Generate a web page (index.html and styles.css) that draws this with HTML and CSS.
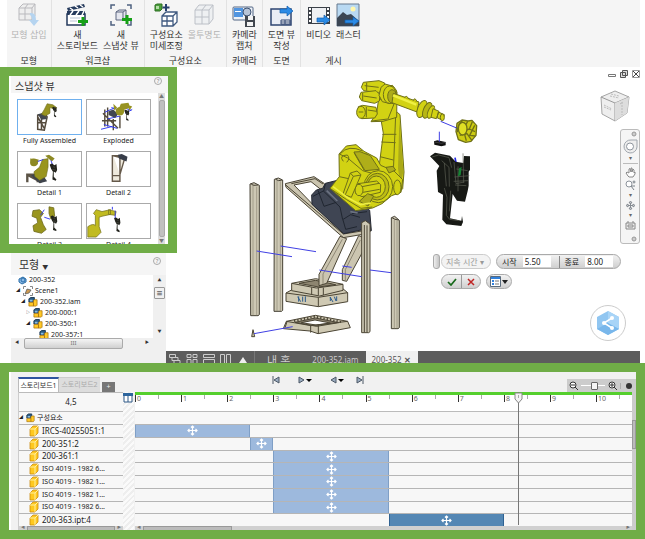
FILE: index.html
```html
<!DOCTYPE html>
<html lang="ko">
<head>
    <meta charset="UTF-8">
    <meta name="viewport" content="width=device-width, initial-scale=1.0">
    <title>200-352</title>
    <link rel="stylesheet" href="styles.css">
</head>
<body>
    <!-- shared shapes -->
    <svg class="defs" width="0" height="0" aria-hidden="true">
        <symbol id="move" viewBox="0 0 11 11">
            <path d="M5.500 1v9M1 5.500h9M4 2.500 5.500 1 7 2.500M4 8.500 5.500 10 7 8.500M2.500 4 1 5.500 2.500 7M8.500 4 10 5.500 8.500 7" fill="none" stroke="#fff" stroke-width="1.200"/>
        </symbol>
        <symbol id="part" viewBox="0 0 10 12">
            <path d="M1 4 4 1h5v7l-3 3H1z" fill="#ffc91f" stroke="#c98a12" stroke-width=".8"/>
            <path d="M1 4h5v7M6 4l3-3" fill="none" stroke="#fff0a0"/>
        </symbol>
        <symbol id="assembly" viewBox="0 0 11 11">
            <path d="M1 2 3 .5h4v5H1z" fill="#2b5c83" stroke="#16344f"/>
            <path d="M2 3h3v2H2z" fill="#8bbbe0"/>
            <path d="M1 6h5v-2l1-1h3v6l-1 1H1z" fill="#ffc928" stroke="#a8720c" stroke-width=".8"/>
            <path d="M6 6v4" stroke="#a8720c"/>
        </symbol>
        <symbol id="gun" viewBox="0 0 12 28">
            <path d="M0 2 3 0l4 3 3-2 1 9-2 4-3-2v8l4 4-1 2-5-2 1-11-3-5z" fill="#22231d"/>
            <path d="M5 5l3 1M4 9l5 1M5 13v8" stroke="#66675a" stroke-width=".7"/>
        </symbol>
    </svg>

    <header class="ribbon">
        <section class="ribbon-group">
            <div class="ribbon-tools">
                <button class="tool" disabled>
                    <svg width="24" height="24" viewBox="0 0 24 24"><path d="M2 5 6 1h12v12l-3 4H2zM2 5h13v12M15 5l3-4M8 5v12M2 11h13M8 5l3-4" fill="#eee" stroke="#b9b9bd"/><path d="M13 10q6-1 6 7h3l-5 6-5-6h3q0-4-2-5z" fill="#b5d4f0"/></svg>
                    <span>모형 삽입</span>
                </button>
            </div>
            <h2>모형</h2>
        </section>
        <section class="ribbon-group">
            <div class="ribbon-tools">
                <button class="tool">
                    <svg width="24" height="24" viewBox="0 0 24 24"><path d="M2 11h18v11H2z" fill="#fff" stroke="#253a5c" stroke-width="1.500"/><path d="M2 8h18v4H2zM2 5 19 1l1 3L3 8z" fill="#253a5c"/><path d="m5 5 3 2m2-4 3 2m2-3 3 2M5 12l3-4m3 4 3-4m3 4 2-4" stroke="#fff" stroke-width="1.500"/><path d="M5 15h10M5 18h7" stroke="#b9c3d2"/><path d="M18 14v9M13 18.500h10" stroke="#16a016" stroke-width="3"/></svg>
                    <span>새<br>스토리보드</span>
                </button>
                <button class="tool">
                    <svg width="24" height="24" viewBox="0 0 24 24"><path d="M2 6V2h4m12 0h4v4M2 18v4h4m12 0h4v-4" fill="none" stroke="#4f6280" stroke-width="1.500"/><path d="m7 9 3-2h7v8l-3 2H7zM7 9h7v8M14 9l3-2" fill="#e4e6ee" stroke="#5c6680"/><path d="M18 12v9M13 16.500h10" stroke="#16a016" stroke-width="3"/></svg>
                    <span>새<br>스냅샷 뷰</span>
                </button>
            </div>
            <h2>워크샵</h2>
        </section>
        <section class="ribbon-group">
            <div class="ribbon-tools">
                <button class="tool">
                    <svg width="24" height="24" viewBox="0 0 24 24"><path d="M1 2 3 1h5v5L6 8H1z" fill="#4b9e3b" stroke="#2c6e22"/><path d="M2 3h3v3H2z" fill="#b5dea9"/><path d="M12 1v7M8.500 4.500h7" stroke="#263f6d" stroke-width="2"/><path d="m8 13 4-4h11v10l-4 4H8zM8 13h11v10M19 13l4-4M13 13v10M8 18h11" fill="#fff" stroke="#405a80" stroke-width="1.300"/></svg>
                    <span>구성요소<br>미세조정</span>
                </button>
                <button class="tool" disabled>
                    <svg width="24" height="24" viewBox="0 0 24 24"><path d="m3 7 4-5h14v14l-4 5H3zM3 7h14v14M17 7l4-5M10 7v14M3 14h14M10 7l4-5" fill="#eef0f2" stroke="#bcc0c7"/></svg>
                    <span>올투명도</span>
                </button>
            </div>
            <h2>구성요소</h2>
        </section>
        <section class="ribbon-group">
            <div class="ribbon-tools">
                <button class="tool">
                    <svg width="24" height="24" viewBox="0 0 24 24"><rect x="1" y="4" width="20" height="13" rx="1" fill="#eef2f8" stroke="#526684"/><path d="M2 5h9v9H2z" fill="#5195e0"/><path d="M3 8h6v1H3z" fill="#fff"/><circle cx="15" cy="9" r="4" fill="#b7c4d7" stroke="#3d5271"/><path d="M13 13h10v11H13z" fill="#42474f"/><path d="M16 13h5v4h-5zM15 19h6v4h-6z" fill="#f4f4f4"/></svg>
                    <span>카메라<br>캡처</span>
                </button>
            </div>
            <h2>카메라</h2>
        </section>
        <section class="ribbon-group">
            <div class="ribbon-tools">
                <button class="tool">
                    <svg width="24" height="24" viewBox="0 0 24 24"><path d="M2 6h20v16H2z" fill="#e9edf5" stroke="#2e4571" stroke-width="1.500"/><path d="M12 17h9v4h-9zM12 19h9M16 17v4" fill="#fff" stroke="#2e4571"/><path d="M11 6h7V3l6 5-6 5v-3h-7z" fill="#2b8be6" stroke="#125fae" stroke-width=".7"/></svg>
                    <span>도면 뷰<br>작성</span>
                </button>
            </div>
            <h2>도면</h2>
        </section>
        <section class="ribbon-group">
            <div class="ribbon-tools">
                <button class="tool">
                    <svg width="24" height="24" viewBox="0 0 24 24"><path d="M1 4h22v17H1z" fill="#3b4048"/><path d="M5 5h14v15H5z" fill="#eef0f3"/><path d="M3 5v15M21 5v15" stroke="#fff" stroke-width="2" stroke-dasharray="2 2"/><path d="M10 15h7v-3l6 5-6 5v-3h-7z" fill="#2b8be6" stroke="#125fae" stroke-width=".7"/></svg>
                    <span>비디오</span>
                </button>
                <button class="tool">
                    <svg width="24" height="24" viewBox="0 0 24 24"><path d="M1 1h22v22H1z" fill="#b9d9f2" stroke="#66788d"/><circle cx="17" cy="6" r="2.500" fill="#fff7ad"/><path d="m1 15 6-6 4 3 4-1 8 7v5H1z" fill="#3b4654"/><path d="M9 17h8v-3l6 4-6 5v-3H9z" fill="#2b8be6" stroke="#125fae" stroke-width=".7"/></svg>
                    <span>래스터</span>
                </button>
            </div>
            <h2>게시</h2>
        </section>
    </header>

    <main class="workspace">
        <aside class="sidebar">
            <section class="snapshots">
                <div class="panel-head">
                    <h3>스냅샷 뷰</h3>
                    <button class="help" aria-label="도움말">?</button>
                </div>
                <div class="snapshots-body">
                    <div class="thumbs">
                        <figure class="thumb active">
                            <svg viewBox="0 0 65 36"><path d="M20 31V16l8-1 2 3-3 14zM24 31V17M20 18l7 12M20 24h8" fill="none" stroke="#554b3d" stroke-width="1.600"/><path d="m20 15 8-2 2 7-6 1z" fill="#424750"/><path d="m24 15 3-5 3-6 6 1 4 3-1 2-6-2v6l-5 3z" fill="#979322" stroke="#6b681d" stroke-width=".6"/><use href="#gun" x="35" y="7" width="6" height="12"/></svg>
                            <figcaption>Fully Assembled</figcaption>
                        </figure>
                        <figure class="thumb">
                            <svg viewBox="0 0 65 36"><path d="M18 10v18m3-20v20m6-8v12m7-15v13M16 14l16 16M15 22h15" stroke="#554b3d" stroke-width="1.500"/><path d="m14 31 12-3M17 26l14 4M21 20l13-3M25 8l6 2M38 8l8 3M40 14l7-4M18 13l11-5" stroke="#2c35f0"/><path d="m22 12 5-2 5 5-3 4-7-3z" fill="#424750"/><circle cx="34" cy="12" r="4.500" fill="#979322"/><path d="m35 4 8-1 2 5-6 2-3 5-4-4zM27 4l4 4-3 3zM42 5l5 2-3 4z" fill="#979322"/><use href="#gun" x="38" y="10" width="7" height="13"/></svg>
                            <figcaption>Exploded</figcaption>
                        </figure>
                        <figure class="thumb">
                            <svg viewBox="0 0 65 36"><path d="M9 32V24h11v8M9 24l15 8" fill="none" stroke="#5b5346" stroke-width="2.500"/><path d="m13 25 10-4 7 10-8 2z" fill="#3e434c"/><path d="m16 21 6-5 3-8 6-1v9l-2 10-7 4-5-4z" fill="#99951e" stroke="#6b681d" stroke-width=".6"/><circle cx="16" cy="11" r="4" fill="#8d8924"/><path d="m12 7 9 1-1 5-7 1zM28 4l4-1 6 4-3 3z" fill="#8d8924"/><path d="m20 10 6-2M34 9l2 5" stroke="#3137ee"/><use href="#gun" x="32" y="12" width="10" height="20"/></svg>
                            <figcaption>Detail 1</figcaption>
                        </figure>
                        <figure class="thumb">
                            <svg viewBox="0 0 65 36"><path d="M26 4v27h8V4zM26 25h8M27 4l12 3-5 17" fill="#eee9dc" stroke="#65594a" stroke-width="1.500"/><path d="m32 3 4-1 6 3-1 5-8-3z" fill="#373d49"/></svg>
                            <figcaption>Detail 2</figcaption>
                        </figure>
                        <figure class="thumb">
                            <svg viewBox="0 0 65 36"><path d="m15 7 7-1 4 4-3 4 3 8 3 5-5 4-8-2-1-6 5-3-1-5-5-2zM32 3l5 1 1 9-4 3-2-6z" fill="#99951e" stroke="#6b681d" stroke-width=".8"/><path d="m23 12 4-6M27 14l6 2" stroke="#3137ee"/><use href="#gun" x="33" y="12" width="9" height="18"/></svg>
                            <figcaption>Detail 3</figcaption>
                        </figure>
                        <figure class="thumb">
                            <svg viewBox="0 0 65 36"><path d="M0 24q6-4 8-1V12l-2-2 3-4 6 2 9-2v5l-9 2-3 1v10l2 6-5 5H0zM22 6l8 2-1 4-7-1z" fill="#c1bb20" stroke="#77731f" stroke-width=".8"/><path d="M26 6v-3M29 7v9" stroke="#3137ee"/><use href="#gun" x="27" y="14" width="9" height="17"/></svg>
                            <figcaption>Detail 4</figcaption>
                        </figure>
                    </div>
                    <div class="vscroll"><i>▲</i><b></b><i>▼</i></div>
                </div>
            </section>

            <section class="model">
                <div class="panel-head">
                    <h3>모형 <small>▼</small></h3>
                    <button class="help" aria-label="도움말">?</button>
                </div>
                <div class="tree-wrap">
                    <ul class="tree">
                        <li class="lv0"><svg width="9" height="9" viewBox="0 0 9 9"><path d="m1 3 4-2 3 2v3L4 8 1 6z" fill="#8bb9e5" stroke="#296da8"/><circle cx="5" cy="4" r="2" fill="none" stroke="#296da8"/></svg>200-352</li>
                        <li class="lv1"><i>◢</i><svg width="10" height="10" viewBox="0 0 10 10"><path d="M.500 3V.500H3m4 0h2.500V3M.500 7v2.500H3m4 0h2.500V7" fill="none" stroke="#888"/><path d="m2 8 2-5 4 1-2 3z" fill="#ce9b52" stroke="#4b5259" stroke-width=".7"/></svg>Scene1</li>
                        <li class="lv2"><i>◢</i><svg width="10" height="10"><use href="#assembly"/></svg>200-352.iam</li>
                        <li class="lv3"><i>▷</i><svg width="10" height="10"><use href="#assembly"/></svg>200-000:1</li>
                        <li class="lv3"><i>◢</i><svg width="10" height="10"><use href="#assembly"/></svg>200-350:1</li>
                        <li class="lv4"><svg width="10" height="10"><use href="#assembly"/></svg>200-357:1</li>
                    </ul>
                    <div class="tree-scroll"><i>▲</i><b>☰</b><i>▼</i></div>
                </div>
                <div class="tree-hscroll"><i>◀</i><b>III</b><i>▶</i></div>
            </section>
        </aside>

        <section class="viewport">
            <div class="canvas">
                <svg class="robot" viewBox="-192 -9 1422 852" preserveAspectRatio="xMinYMin meet" stroke-linejoin="round">
                    <!-- posts -->
                    <g fill="#cdc8b4" stroke="#454034" stroke-width="3">
                        <path d="M60 342 72 338 88 346V734L84 737H62z"/>
                        <path d="M133 328 145 324 158 330V721L155 724H132z"/>
                        <path d="M484 443 494 439 508 451V773L504 776H484z"/>
                        <path d="M69 346v390M80 350v386M141 332v391M151 334v389M493 450v325M501 452v323" stroke="#8e8875" stroke-width="2"/>
                        <path d="m64 343 8 3 12-1M137 328l9 4 10-2M486 443l9 5 11 2" fill="none"/>
                    </g>
                    <!-- base plates -->
                    <g fill="#cfc9b3" stroke="#4b4535" stroke-width="3">
                        <path d="m168 669 20-11 148-4 17 14v27l-88 15-97-16z"/>
                        <path d="m168 669 97 13 88-14M265 682v28" fill="none"/>
                        <path d="m185 640 72-14 82 17v18l-70 17-84-16z"/>
                        <path d="m185 640 74 14 80-11M245 652v21M265 654v22M280 653v22" fill="none"/>
                        <path d="m207 640 50-9 60 13-51 7z" fill="#8d8570"/>
                        <path d="m203 680 9 15m-6-16v16m12-15v15m8-16v17M300 681l9 15m-8-14v11m12-13 5 13m2-14v14" stroke="#2c5b8c" stroke-width="3"/>
                        <path d="m169 754 87-18 97 18 8 19-97 18-24-8-80-7z"/>
                        <path d="m195 757 61-13 70 14-66 11z" fill="#8d8570"/>
                        <path d="m214 758 41-8 46 9-43 6z" fill="#fff"/>
                        <path d="m169 754 74 13 110-13M165 773l6-18M242 767v21M265 765v25" fill="none"/>
                        <path d="m192 753 63-13 78 16" fill="none" stroke-width="6" stroke-dasharray="4 6"/>
                        <path d="m65 800 4-21 5 21z"/>
                    </g>
                    <!-- tilted frame -->
                    <g fill="#cbc5b0" stroke="#4b4535" stroke-width="3">
                        <path d="m386 497 16 6-1 37-51 94-13-3v-32z"/>
                        <path d="m391 510-45 89v31" fill="none" stroke="#8e8875"/>
                        <path fill-rule="evenodd" d="m166 341 86-21 30 20 140 142-6 8-76 13L168 352zm26 4 57 59 28-42-34-27z"/>
                        <path d="m166 344 174 148 80-13M184 341l71-15 24 16" fill="none"/>
                        <path d="m330 499 20 7-60 134-23 7v-34z"/>
                        <path d="m337 508-58 104v30" fill="none" stroke="#8e8875"/>
                    </g>
                    <path d="m245 375 14-15 19-5 8-15 32-8 74 66 27 23 5 61-26-3-57 12-95-88z" fill="#3f4553" stroke="#242832" stroke-width="3"/>
                    <path d="m249 379 31-16 50 48 8 38 24-15 28 8M286 342l-5 22M264 361l18 48 37-12m20 53 8 28 34-8m-15-39 45-6" fill="none" stroke="#202630" stroke-width="3"/>
                    <path d="m290 362 32 31m39 32 22 4" stroke="#6c7382" stroke-width="5"/>
                    <path d="M395 458 406 452 420 462V785L416 788H395zM403 465v322M411 466v321" fill="#cdc8b4" stroke="#4b4535" stroke-width="3"/>

                    <!-- robot body -->
                    <g fill="#d2d213" stroke="#6f7018" stroke-width="3">
                        <path d="m454 155 48-28 8 7 12 172-4 50-18 18-58-32 6-58 12-94z"/>
                        <path d="m497 135-7 170 16 52M457 193h42M454 216l43 2M450 260l40 10" fill="none"/>
                        <path d="m508 150 12 154-8 42-8-50z" fill="#aaa917" stroke="none"/>
                        <path d="m300 355 28-35-1-68 22-24 29-4 24 20 38 20 12 22 40 17 26 26-5 38-28 10-29 24-28 13-51 8z"/>
                        <path d="m328 252 25 12 45 38 46 13M328 320l28 6 31 42M300 355l50 34 43 26 34-4M331 251q24-28 67-8M340 274q-15-18 12-19 10 10-2 22M372 248l31 54M408 250l37 52" fill="none"/>
                        <path d="m372 246 33 56 43-4-27-41-31-12z" fill="#afae19"/>
                        <ellipse cx="445" cy="350" rx="43" ry="48"/>
                        <ellipse cx="442" cy="350" rx="35" ry="40" fill="#bdbc14"/>
                        <ellipse cx="439" cy="350" rx="27" ry="32"/>
                        <path d="m384 341 56-8 12 11-1 23-55 13-18-9-3-19z"/>
                        <ellipse cx="387" cy="360" rx="12" ry="17"/>
                        <path d="m361 309 20-6 12 11-29 68-25-10z"/>
                        <path d="m361 309 9 10 23-4M370 319l-24 55M396 350l51-10M399 367l50-9" fill="none"/>
                        <path d="m468 292 21-3 8 11-20 9zM388 394l25-23 18 7-17 30z" fill="#adac1b"/>
                        <ellipse cx="502" cy="352" rx="11" ry="22"/>
                        <path d="m309 350 44 33 39 21 30-5" fill="none" stroke="#eff044" stroke-width="5"/>
                        <!-- head and motors -->
                        <path d="m423 155 17-26 7-50 12-26 28-7 14 20-1 76-41 12z"/>
                        <path d="m447 86 45 16-18 45M425 153l48-6" fill="none"/>
                        <path d="m400 37 47-5 17 7v19l-18 10-45-6-7-10z"/>
                        <path d="m393 67 45-5 12 12-2 19-14 7-39-8-7-11z"/>
                        <path d="m385 110 13-4 40 6 4 20-8 12-39 2-13-13z"/>
                        <ellipse cx="393" cy="127" rx="13" ry="18"/>
                        <path d="M410 38v24M398 69v22M409 111v31M404 47l42 5M400 78l40 6M413 120l27 4M386 126h14" fill="none"/>
                        <path d="m453 52 12-10 25 7 9 12-2 26-17 14-23-6-10-19z"/>
                        <ellipse cx="479" cy="74" rx="19" ry="26"/>
                        <ellipse cx="486" cy="79" rx="13" ry="20" fill="#adac1b"/>
                        <path d="m490 70 77 26-6 30-75-28z"/>
                        <path d="m489 76 70 28" stroke="#eff044" stroke-width="7"/>
                        <path d="m523 82 7-3 8 9M549 91l6-5 7 9"/>
                        <ellipse cx="576" cy="117" rx="13" ry="27" transform="rotate(22 576 117)"/>
                        <ellipse cx="592" cy="121" rx="12" ry="25" transform="rotate(22 592 121)" fill="#b8b715"/>
                        <ellipse cx="603" cy="126" rx="9" ry="20" transform="rotate(22 603 126)"/>
                        <path d="m609 116 18 8-8 22-16-4zM625 126l18 8-5 17-17-8z"/>
                        <ellipse cx="637" cy="142" rx="6" ry="10"/>
                    </g>
                    <!-- wrist -->
                    <g fill="#cdcc12" stroke="#6f7018" stroke-width="4">
                        <path d="m681 160 15-10 18 3 12-2 14 16-2 29-15 18-16 3-22-8-7-24z"/>
                        <path d="M713 154q-17 23-4 58M697 153q-15 10-15 34M727 155l-9 22 17 8M689 196l22-5 15 21M719 177q-18 3-10 16M734 166l-15 30 17 2" fill="none"/>
                        <ellipse cx="698" cy="176" rx="13" ry="19" fill="#dfdf25"/>
                    </g>
                    <!-- gripper -->
                    <path d="m612 214 10-3 25 5v10l-13 3-21-5z" fill="#111"/>
                    <path d="m614 216 20 4 12-3" stroke="#555" stroke-width="2" fill="none"/>
                    <path d="m675 263 5 25" stroke="#2428e8" stroke-width="5"/>
                    <path d="m600 259 15-11 45 9 17 18 23 4 2-21 18 1v40l-4 6v42l-3 16-8 32-24-3-13-20-8 73 34 7 2-14 3 18-5 12-45-5-12-14 2-75-15-8-4-64 8-14z" fill="#171915"/>
                    <path d="m606 261 20-6 31 8 8 30m-30-21 22 20 1 58m14-74 6 65 25-5m-24-39 34 5m-40 19 45-4m-47 17 43-2m-39 13 34 2m-25-58v75m15-114 2 88m-58 16 8 28-2 54 10 12 27 4m-24-90-4 62m-15-145 6 70" fill="none" stroke="#5d6054" stroke-width="2"/>
                    <path d="m687 295 8-4-3 25-8 3z" fill="#178435"/>
                    <path d="m80 543 106 17M152 528l106 17M268 600l127 20M420 600l63 8M337 588l28 4M72 791l116-21M632 154l48 20M628 185v30" fill="none" stroke="#4040e4" stroke-width="3"/>
                </svg>

                <div class="window-buttons">
                    <button aria-label="최소화"><svg width="8" height="8"><path d="M.500 4.500h7v2h-7z" fill="#fff" stroke="#777"/></svg></button>
                    <button aria-label="복원"><svg width="8" height="8"><path d="M2.500.500h5v5h-5zM.500 2.500h5v5h-5z" fill="#ddd" stroke="#555"/></svg></button>
                    <button aria-label="닫기"><svg width="8" height="8"><path d="M.500.500h7v7h-7z" fill="none" stroke="#999"/><path d="m1 1 6 6m0-6L1 7" stroke="#444"/></svg></button>
                </div>
                <svg class="cube" width="30" height="32" viewBox="0 0 30 32"><path d="M1 7 15 1l14 6-2 16-12 8L2 24z" fill="#eee" stroke="#a5a5a5"/><path d="m1 7 14 6 14-6M15 13v18" fill="none" stroke="#999"/><path d="m15 13 14-6-2 16-12 8z" fill="#ddd"/><path d="m10 6 9 2M11 4l8 2M4 15l8 4M4 17l7 3M22 12v13M20 14l3-2" stroke="#bbb" stroke-dasharray="2 1"/></svg>
                <nav class="navbar">
                    <button aria-label="닫기"><svg width="6" height="6"><circle cx="3" cy="3" r="2" fill="#ccc" stroke="#999"/></svg></button>
                    <button aria-label="휠"><svg width="15" height="15"><path d="M14 1v7a6.500 6.500 0 1 1-6-7z" fill="#eee" stroke="#a0a6ad"/><circle cx="7" cy="7.500" r="3.500" fill="#fff" stroke="#8e959d"/></svg></button>
                    <i>▾</i>
                    <hr>
                    <button aria-label="초점이동"><svg width="11" height="11"><path d="M3 9 1 6l1-1 2 1V2l1-.5L6 5V1h1v4l1-3 1 1v3l1-1v2L8 10H4z" fill="#fff" stroke="#888"/></svg></button>
                    <button aria-label="줌"><svg width="11" height="11"><circle cx="4" cy="4" r="3" fill="#fff" stroke="#8c939b"/><path d="m6 6 3 4M7.500 2h3M9 .5v3M7 6h3" stroke="#7b8289"/></svg></button>
                    <i>▾</i>
                    <button aria-label="회전"><svg width="11" height="11"><path d="M5.500 1 7 3H4zM5.500 10 7 8H4zM1 5.500 3 4v3zM10 5.500 8 4v3zM3 5.500h5M5.500 3v5" fill="#fff" stroke="#858b92"/></svg></button>
                    <i>▾</i>
                    <button aria-label="면 보기"><svg width="11" height="10"><path d="M1 3h9v6H1zM3 3V1M8 3V1M3 5h5v2H3z" fill="#eee" stroke="#888"/></svg></button>
                    <button class="nav-end" aria-label="옵션"><svg width="6" height="6"><circle cx="3" cy="3" r="2" fill="#ccc" stroke="#999"/></svg></button>
                </nav>

                <form class="mini-toolbar">
                    <div class="mini-row">
                        <span class="grip"></span>
                        <select class="pill duration" aria-label="지속 시간" disabled><option>지속 시간 ▾</option></select>
                        <div class="pill range">
                            <label>시작 <input type="text" value="5.50"></label>
                            <label>종료 <input type="text" value="8.00"></label>
                        </div>
                    </div>
                    <div class="mini-row mini-actions">
                        <div class="pill confirm">
                            <button type="button" aria-label="확인"><svg width="10" height="8"><path d="m1 4 3 3 5-6" fill="none" stroke="#17691a" stroke-width="1.700"/></svg></button>
                            <button type="button" aria-label="취소"><svg width="8" height="8"><path d="m1 1 6 6m0-6L1 7" stroke="#bf2424" stroke-width="1.500"/></svg></button>
                        </div>
                        <button type="button" class="pill options" aria-label="옵션"><svg width="18" height="12"><path d="M.500.500h10v10H.500z" fill="#fff" stroke="#596b7d"/><path d="M1 2h9M2 5h2M2 8h2" stroke="#3281dc" stroke-width="2"/><path d="M5 5h4M5 8h4" stroke="#777"/><path d="M12 4h6l-3 4z" fill="#222"/></svg></button>
                    </div>
                </form>
                <button class="share" aria-label="공유"><svg width="24" height="24" viewBox="0 0 24 24"><path d="m12 0 11 6v12l-11 6L1 18V6z" fill="#91c6f1"/><path d="M12 0v12l11 6V6z" fill="#a8d4f7"/><path d="m1 18 11-6 11 6-11 6z" fill="#79b7eb"/><path d="m16 7-8 5 8 5" fill="none" stroke="#fff" stroke-width="1.500"/><g fill="#fff"><circle cx="16" cy="7" r="2"/><circle cx="8" cy="12" r="2"/><circle cx="16" cy="17" r="2"/></g></svg></button>
            </div>

            <div class="doc-tabs">
                <div class="arrange">
                    <svg width="12" height="10"><path d="M.500.500h6v3h-6zM3 3.500h6v3H3zM5 6.500h6v3H5z" fill="#5d5d5d" stroke="#ccc"/></svg>
                    <svg width="12" height="10"><path d="M1 .500h4v3H1zM7 .500h4v3H7zM1 5.500h4v4H1zM7 5.500h4v4H7z" fill="none" stroke="#ccc"/></svg>
                    <svg width="12" height="10"><path d="M.500.500h11v3H.500zM.500 5.500h11v4H.500z" fill="none" stroke="#ccc"/></svg>
                    <svg width="12" height="10"><path d="M.500.500h4v9h-4zM6.500.500h4v9h-4z" fill="none" stroke="#ccc"/></svg>
                    <svg width="12" height="10"><path d="m6 3 4 6H2z" fill="#eee"/></svg>
                </div>
                <a href="#" class="doc-tab home">내 홈</a>
                <a href="#" class="doc-tab">200-352.iam</a>
                <a href="#" class="doc-tab active">200-352 <b>✕</b></a>
            </div>
        </section>
    </main>

    <section class="storyboard">
        <div class="board">
            <div class="board-head">
                <div class="board-tabs">
                    <button class="board-tab active">스토리보드1</button>
                    <button class="board-tab">스토리보드2</button>
                    <button class="add" aria-label="추가">+</button>
                </div>
                <div class="playback">
                    <button aria-label="처음"><svg width="8" height="8"><path d="M1 0v8M7 1v6L2 4z" fill="#9bacc0" stroke="#4c5866"/></svg></button>
                    <button aria-label="재생"><svg width="14" height="8"><path d="M1 1v6l5-3z" fill="#9bacc0" stroke="#4c5866"/><path d="M8 3h6l-3 3z"/></svg></button>
                    <button aria-label="역재생"><svg width="14" height="8"><path d="M6 1v6L1 4z" fill="#9bacc0" stroke="#4c5866"/><path d="M8 3h6l-3 3z"/></svg></button>
                    <button aria-label="끝"><svg width="8" height="8"><path d="M7 0v8M1 1v6l5-3z" fill="#9bacc0" stroke="#4c5866"/></svg></button>
                </div>
                <div class="zoom">
                    <button aria-label="축소"><svg width="9" height="9"><circle cx="4" cy="4" r="3" fill="#fff" stroke="#333"/><path d="M2 4h4M6 6l3 3" stroke="#333"/></svg></button>
                    <input type="range" aria-label="확대/축소" value="58">
                    <button aria-label="확대"><svg width="9" height="9"><circle cx="4" cy="4" r="3" fill="#fff" stroke="#333"/><path d="M2 4h4M4 2v4M6 6l3 3" stroke="#333"/></svg></button>
                    <button class="dot" aria-label="맞춤"><svg width="6" height="6"><circle cx="3" cy="3" r="3" fill="#333"/></svg></button>
                </div>
            </div>

            <div class="timeline">
                <div class="names">
                    <div class="time">4,5</div>
                    <div class="name-root"><i>◢</i><svg width="9" height="10"><use href="#assembly"/></svg>구성요소</div>
                    <ul class="rows">
                        <li><svg width="10" height="12"><use href="#part"/></svg>IRCS-40255051:1</li>
                        <li><svg width="10" height="12"><use href="#part"/></svg>200-351:2</li>
                        <li><svg width="10" height="12"><use href="#part"/></svg>200-361:1</li>
                        <li class="iso"><svg width="10" height="12"><use href="#part"/></svg>ISO 4019 - 1982 6...</li>
                        <li class="iso"><svg width="10" height="12"><use href="#part"/></svg>ISO 4019 - 1982 1...</li>
                        <li class="iso"><svg width="10" height="12"><use href="#part"/></svg>ISO 4019 - 1982 1...</li>
                        <li class="iso"><svg width="10" height="12"><use href="#part"/></svg>ISO 4019 - 1982 6...</li>
                        <li><svg width="10" height="12"><use href="#part"/></svg>200-363.ipt:4</li>
                    </ul>
                    <div class="hscroll"><i>◀</i><b></b><i>▶</i></div>
                </div>
                <div class="gutter"><svg width="10" height="10"><path d="M1 1h8v8H1z" fill="#fff" stroke="#315b88"/><path d="M0 0h10v3H0z" fill="#2d659d"/><path d="M5 3v6" stroke="#315b88"/></svg></div>
                <div class="tracks">
                    <div class="ruler">
                        <span>0</span><span>1</span><span>2</span><span>3</span><span>4</span><span>5</span><span>6</span><span>7</span><span>8</span><span>9</span><span>10</span>
                    </div>
                    <div class="track-root"></div>
                    <ul class="rows">
                        <li><div class="bar" style="--start:0;--span:2.5"><svg width="11" height="11"><use href="#move"/></svg></div></li>
                        <li><div class="bar" style="--start:2.5;--span:.5"><svg width="11" height="11"><use href="#move"/></svg></div></li>
                        <li><div class="bar" style="--start:3;--span:2.5"><svg width="11" height="11"><use href="#move"/></svg></div></li>
                        <li><div class="bar" style="--start:3;--span:2.5"><svg width="11" height="11"><use href="#move"/></svg></div></li>
                        <li><div class="bar" style="--start:3;--span:2.5"><svg width="11" height="11"><use href="#move"/></svg></div></li>
                        <li><div class="bar" style="--start:3;--span:2.5"><svg width="11" height="11"><use href="#move"/></svg></div></li>
                        <li><div class="bar" style="--start:3;--span:2.5"><svg width="11" height="11"><use href="#move"/></svg></div></li>
                        <li><div class="bar selected" style="--start:5.5;--span:2.5"><svg width="11" height="11"><use href="#move"/></svg></div></li>
                    </ul>
                    <div class="hscroll track-scroll"><i>◀</i><b></b><i>▶</i></div>
                    <div class="playhead" style="--start:8.3"><svg width="9" height="12"><path d="M1 1h7v6L4.500 11 1 7z" fill="#f4f4f4" stroke="#888"/><path d="M4.500 3v3" stroke="#aaa"/></svg></div>
                </div>
                <div class="board-scroll"><b></b></div>
            </div>
        </div>
    </section>
</body>
</html>
```
FILE: styles.css
```css
* {
    box-sizing: border-box;
}
body {
    --green: #70ad47;
    --unit: 9.28%;
    margin: 0;
    min-height: 100vh;
    display: flex;
    flex-direction: column;
    background-color: #fff;
    color: #333;
    font: 7px/12px "Noto Sans", "Noto Sans CJK KR", sans-serif;
}
h2, h3, ul, figure {
    margin: 0;
    padding: 0;
    font-weight: normal;
}
ul {
    list-style: none;
}
button {
    border: 0;
    padding: 0;
    background: none;
    color: inherit;
    font: inherit;
}
svg {
    display: block;
    flex-shrink: 0;
}
i {
    font-style: normal;
}
.defs {
    position: absolute;
}

/* ribbon */
.ribbon {
    display: flex;
    height: 67px;
    margin: 0 5px 0 7px;
    background-color: #f5f5f5;
    font-family: "Noto Sans CJK KR", sans-serif;
    font-size: 9px;
    line-height: 11px;
}
.ribbon-group {
    display: flex;
    flex-direction: column;
    justify-content: space-between;
    padding: 3px 5px 1px;
    border-right: 1px solid #e2e2e2;
}
.ribbon-group:first-child {
    padding: 3px 4px 1px;
}
.ribbon-group:last-child {
    border-right: 0;
}
.ribbon-tools {
    display: flex;
    gap: 5px;
}
.ribbon-group h2 {
    font-size: 9px;
    text-align: center;
}
.tool {
    display: flex;
    flex-direction: column;
    align-items: center;
    gap: 2px;
    white-space: nowrap;
}
.tool:disabled {
    color: #b3b3b3;
}

/* sidebar */
.workspace {
    display: flex;
    height: 296px;
    margin-right: 5px;
}
.sidebar {
    width: 166px;
    flex-shrink: 0;
    display: flex;
    flex-direction: column;
}
.snapshots {
    position: relative;
    z-index: 1;
    height: 186px;
    margin-right: -11px;
    padding: 0 0 0 2px;
    border: 9px solid var(--green);
    background-color: #fff;
    display: flex;
    flex-direction: column;
}
.panel-head {
    display: flex;
    justify-content: space-between;
    padding: 1px 6px 0 4px;
    background-color: #f5f5f5;
}
.panel-head h3 {
    padding-top: 2px;
    font: 10px/14px "Noto Sans CJK KR", sans-serif;
}
.help {
    width: 8px;
    height: 8px;
    border: 1px solid #aaa;
    border-radius: 50%;
    color: #888;
    font-size: 6px;
    line-height: 6px;
}
.snapshots-body {
    display: flex;
    min-height: 0;
    flex: 1;
    overflow: hidden;
}
.thumbs {
    flex: 1;
    display: grid;
    grid-template-columns: 65px 65px;
    grid-auto-rows: 52px;
    column-gap: 4px;
    padding: 6px;
}
.thumb {
    color: #222;
    text-align: center;
}
.thumb svg {
    width: 100%;
    height: 36px;
    border: 1px solid #aaa;
}
.thumb.active svg {
    border-color: #6fb0ee;
}
.vscroll {
    width: 7px;
    margin-right: 3px;
    display: flex;
    flex-direction: column;
    align-items: center;
    background-color: #ddd;
    color: #777;
    font-size: 5px;
    line-height: 7px;
}
.vscroll b {
    flex: 1;
    width: 6px;
    border: 1px solid #a9a9a9;
    border-radius: 2px;
    background-color: #c0c0c0;
}

.model {
    flex: 1;
    min-height: 0;
    margin-left: 11px;
    background-color: #f0f0f0;
}
.model .panel-head {
    padding: 4px 5px 1px 8px;
}
.model h3 {
    padding: 0;
    font-size: 11px;
    line-height: 15px;
}
.model h3 small {
    font-size: 6px;
    vertical-align: middle;
}
.tree-wrap {
    display: flex;
    height: 63px;
    overflow: hidden;
    background-color: #fff;
}
.tree {
    flex: 1;
    color: #222;
}
.tree li {
    display: flex;
    align-items: center;
    gap: 2px;
    height: 11px;
    padding-left: 7px;
}
.tree i {
    width: 5px;
    font-size: 4px;
}
.tree .lv1 {
    padding-left: 5px;
}
.tree .lv2 {
    padding-left: 10px;
}
.tree .lv3 {
    padding-left: 15px;
}
.tree .lv4 {
    padding-left: 28px;
}
.tree-scroll {
    width: 13px;
    display: flex;
    flex-direction: column;
    align-items: center;
    background-color: #f0f0f0;
    font-size: 4px;
}
.tree-scroll b {
    width: 11px;
    height: 12px;
    margin-bottom: auto;
    border: 1px solid #999;
    border-radius: 1px;
    color: #777;
    font-size: 5px;
    text-align: center;
    line-height: 10px;
}
.tree-hscroll {
    display: flex;
    align-items: center;
    height: 11px;
    margin-right: 13px;
    padding: 0 4px;
    gap: 5px;
    font-size: 4px;
}
.tree-hscroll b {
    width: 99px;
    height: 11px;
    border: 1px solid #aaa;
    border-radius: 2px;
    background: linear-gradient(#f5f5f5, #d0d0d0);
    color: #777;
    font-size: 6px;
    font-weight: normal;
    line-height: 9px;
    text-align: center;
}
.tree-hscroll i:last-child {
    margin-left: auto;
}

/* viewport */
.viewport {
    flex: 1;
    min-width: 0;
    display: flex;
    flex-direction: column;
}
.canvas {
    position: relative;
    flex: 1;
    min-height: 0;
}
.robot {
    width: 100%;
    height: 100%;
}
.window-buttons {
    position: absolute;
    top: 3px;
    right: 0;
    display: flex;
    gap: 4px;
}
.cube {
    position: absolute;
    top: 23px;
    right: 10px;
}
.navbar {
    position: absolute;
    top: 62px;
    right: 0;
    width: 20px;
    height: 115px;
    display: flex;
    flex-direction: column;
    align-items: center;
    gap: 2px;
    padding: 1px 0;
    border: 1px solid #bbb;
    border-radius: 3px;
    background-color: #f5f5f5;
}
.navbar button:first-child,
.navbar .nav-end {
    align-self: flex-end;
    margin-right: 2px;
}
.navbar .nav-end {
    margin-top: auto;
}
.navbar i {
    color: #666;
    font-size: 6px;
    line-height: 5px;
}
.navbar hr {
    width: 15px;
    margin: 0 0 1px;
    border: 0;
    border-top: 1px solid #bbb;
}
.mini-toolbar {
    position: absolute;
    top: 187px;
    right: 19px;
    display: flex;
    flex-direction: column;
    gap: 5px;
}
.mini-row {
    display: flex;
    align-items: center;
    gap: 5px;
}
.mini-actions {
    padding-left: 8px;
}
.grip {
    width: 7px;
    height: 15px;
    margin-right: -4px;
    border: 1px solid #aaa;
    border-radius: 3px;
    background: linear-gradient(90deg, #eee, #c5c5c5);
}
.pill {
    display: flex;
    align-items: center;
    height: 15px;
    border: 1px solid #aaa;
    border-radius: 8px;
    background: linear-gradient(#f2f2f2, #cfcfcf);
}
.duration {
    appearance: none;
    width: 50px;
    padding: 0 4px;
    border-color: #ccc;
    background: #f3f3f3;
    color: #999;
    opacity: 1;
    font: 8px/12px "Noto Sans CJK KR", sans-serif;
}
.range {
    width: 125px;
}
.range label {
    display: flex;
    align-items: center;
    gap: 6px;
    width: 62px;
    padding-left: 5px;
    color: #222;
    font-family: "Noto Sans CJK KR", sans-serif;
    font-size: 8px;
}
.range label + label {
    border-left: 1px solid #888;
}
.range input {
    width: 28px;
    height: 11px;
    padding: 0 2px;
    border: 0;
    background-color: #fff;
    color: #222;
    font: 8px/11px "Noto Sans", sans-serif;
}
.confirm button {
    display: flex;
    align-items: center;
    justify-content: center;
    width: 19px;
    height: 13px;
}
.confirm button + button {
    border-left: 1px solid #999;
}
.options {
    padding: 0 3px;
}
.share {
    position: absolute;
    right: 14px;
    bottom: 10px;
    width: 36px;
    height: 36px;
    display: flex;
    align-items: center;
    justify-content: center;
    border: 1px solid #ccc;
    border-radius: 50%;
    background-color: #fff;
}
.doc-tabs {
    display: flex;
    height: 12px;
    overflow: hidden;
    background-color: #5d5d5d;
}
.arrange {
    display: flex;
    gap: 5px;
    padding: 3px 5px 0 3px;
    border-right: 1px solid #777;
}
.doc-tab {
    padding: 0 7px 0 10px;
    color: #ccc;
    font-size: 8px;
    line-height: 18px;
    text-decoration: none;
    white-space: nowrap;
}
.doc-tab.home {
    margin-right: 5px;
    padding-left: 12px;
    font-family: "Noto Sans CJK KR", sans-serif;
    font-size: 11px;
}
.doc-tab.active {
    padding-left: 6px;
    background-color: #f0f0f0;
    color: #555;
}

/* storyboard */
.storyboard {
    flex: 1;
    border: 9px solid var(--green);
    background-color: #fff;
    padding-left: 2px;
}
.board {
    height: 158px;
    padding-left: 7px;
    background-color: #f1f1f1;
}
.board-head {
    display: flex;
    justify-content: space-between;
    align-items: flex-end;
    height: 20px;
}
.board-tabs {
    display: flex;
    align-items: flex-end;
    flex: 0 0 254px;
}
.board-tab {
    width: 41px;
    height: 15px;
    border-top: 1px solid #ccc;
    background-color: #ddd;
    color: #aaa;
    white-space: nowrap;
}
.board-tab.active {
    border: 1px solid #bbb;
    border-top: 2px solid #2f54a0;
    border-bottom: 0;
    background-color: #fff;
    color: #333;
}
.add {
    width: 13px;
    height: 10px;
    margin-left: 2px;
    background-color: #777;
    color: #eee;
    line-height: 10px;
}
.playback {
    display: flex;
    gap: 18px;
    margin-right: auto;
    padding-bottom: 8px;
}
.playback button:last-child {
    margin-left: -6px;
}
.zoom {
    display: flex;
    align-items: center;
    gap: 3px;
    height: 13px;
    padding: 0 4px 0 2px;
    background-color: #ccc;
}
.zoom input {
    appearance: none;
    width: 24px;
    height: 1px;
    margin: 0;
    background-color: #fff;
}
.zoom input::-webkit-slider-thumb {
    appearance: none;
    width: 7px;
    height: 8px;
    border: 1px solid #666;
    border-radius: 1px;
    background-color: #f4f4f4;
}
.zoom .dot {
    padding-left: 5px;
    border-left: 1px solid #aaa;
}
.timeline {
    display: flex;
    height: 138px;
}
.names {
    width: 105px;
    border-left: 1px solid #ccc;
    color: #222;
}
.time {
    height: 19px;
    border-top: 1px solid #bbb;
    background-color: #f7f7f7;
    font-size: 8px;
    line-height: 17px;
    text-align: center;
}
.name-root {
    display: flex;
    align-items: center;
    gap: 2px;
    height: 13px;
    border-top: 1px solid #bbb;
    background-color: #f7f7f7;
}
.name-root i {
    width: 5px;
    font-size: 4px;
}
.rows {
    display: grid;
    grid-template-rows: repeat(8, 1fr);
    height: 102px;
}
.rows li {
    display: flex;
    min-height: 0;
    border-top: 1px solid #b5b5b5;
    background-color: #f7f7f7;
}
.names .rows li {
    align-items: center;
    gap: 3px;
    padding-left: 10px;
    font-size: 8px;
    white-space: nowrap;
}
.names .rows .iso {
    font-size: 7px;
}
.hscroll {
    display: flex;
    height: 4px;
    padding: 0 2px;
    gap: 2px;
    overflow: hidden;
    background-color: #d0d0d0;
    color: #777;
    font-size: 4px;
    line-height: 4px;
}
.hscroll b {
    flex: 1;
    border: 1px solid #999;
    border-bottom: 0;
    background-color: #bbb;
}
.gutter {
    width: 11px;
    padding-top: 1px;
    background: repeating-linear-gradient(135deg, #eee 0 2px, #fafafa 2px 4px);
}
.tracks {
    position: relative;
    flex: 1;
    min-width: 0;
    padding-left: 1px;
}
.ruler {
    display: flex;
    height: 19px;
    overflow: hidden;
    border-top: 3px solid #55cf2d;
    background-color: #fff;
    color: #666;
}
.ruler span {
    flex: 0 0 var(--unit);
    height: 7px;
    padding-left: 1px;
    border-left: 1px solid #333;
    background: linear-gradient(#aaa, #aaa) 50% 0 / 1px 4px no-repeat;
    line-height: 8px;
}
.track-root {
    height: 13px;
    border-top: 1px solid #bbb;
    background-color: #f7f7f7;
}
.bar {
    display: flex;
    align-items: center;
    justify-content: center;
    width: calc(var(--span) * var(--unit));
    margin-left: calc(var(--start) * var(--unit));
    border: 1px solid #7f9fc6;
    border-width: 0 1px;
    background-color: #9db9dd;
}
.bar.selected {
    border-color: #2f6292;
    background-color: #5487b4;
}
.track-scroll b {
    flex: 0 0 18%;
}
.track-scroll i:last-child {
    margin-left: auto;
}
.playhead {
    position: absolute;
    top: 0;
    bottom: 5px;
    left: calc(var(--start) * var(--unit));
    width: 9px;
    margin-left: -4px;
    background: linear-gradient(#777, #777) 50% 0 / 1px 100% no-repeat;
}
.board-scroll {
    width: 4px;
    padding-top: 28px;
    background-color: #ccc;
}
.board-scroll b {
    display: block;
    height: 29px;
    border: 1px solid #999;
    background-color: #bbb;
}
```
